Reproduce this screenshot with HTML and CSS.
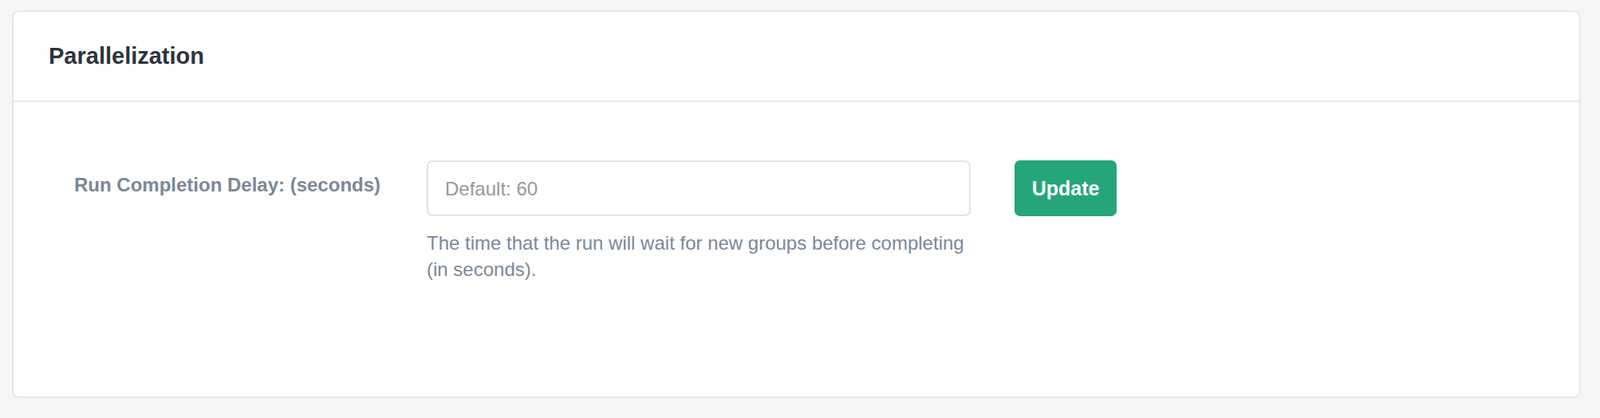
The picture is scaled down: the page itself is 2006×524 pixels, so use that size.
FILE: index.html
```html
<!DOCTYPE html>
<html>
<head>
<meta charset="utf-8">
<title>Parallelization</title>
<link rel="stylesheet" href="styles.css">
</head>
<body>
<section class="card">
  <header class="card-header">
    <h2 class="card-title">Parallelization</h2>
  </header>
  <div class="card-body">
    <div class="form-row">
      <label class="form-label" for="delay">Run Completion Delay: (seconds)</label>
      <div class="form-field">
        <input id="delay" class="form-input" type="text" placeholder="Default: 60">
        <p class="form-help">The time that the run will wait for new groups before completing (in seconds).</p>
      </div>
      <button class="btn-update" type="button">Update</button>
    </div>
  </div>
</section>
</body>
</html>
```

FILE: styles.css
```css
html, body {
  margin: 0;
  padding: 0;
  background: #f6f6f6;
  font-family: "Liberation Sans", Arial, Helvetica, sans-serif;
}

body {
  padding: 13px 24px 26px 15px;
}

.card {
  background: #ffffff;
  border: 2px solid #e7e7e7;
  border-radius: 9px;
  overflow: hidden;
}

.card-header {
  height: 111px;
  display: flex;
  align-items: center;
  padding: 0 44px;
  border-bottom: 2px solid #e7ebef;
}

.card-title {
  margin: 0;
  font-size: 29px;
  font-weight: bold;
  color: #2a343d;
  line-height: 1;
}

.card-body {
  padding: 73px 76px 0;
  height: 296px;
  box-sizing: content-box;
}

.form-row {
  display: flex;
  align-items: flex-start;
}

.form-label {
  width: 442px;
  flex: none;
  padding-top: 14px;
  font-size: 24px;
  line-height: 34px;
  font-weight: bold;
  color: #7b8896;
}

.form-field {
  width: 682px;
  flex: none;
}

.form-input {
  display: block;
  box-sizing: border-box;
  width: 682px;
  height: 70px;
  margin: 0;
  padding: 2px 21px 0;
  border: 2px solid #dfe4ec;
  border-radius: 7px;
  background: #fff;
  font-family: "Liberation Sans", Arial, Helvetica, sans-serif;
  font-size: 24px;
  color: #333;
  outline: none;
}

.form-input::placeholder {
  color: #9b9792;
}

.form-help {
  margin: 17px 0 0;
  font-size: 24px;
  line-height: 33px;
  color: #7b8896;
}

.btn-update {
  flex: none;
  margin-left: 55px;
  width: 128px;
  height: 70px;
  border: none;
  border-radius: 7px;
  background: #26a57a;
  color: #fff;
  font-family: "Liberation Sans", Arial, Helvetica, sans-serif;
  font-size: 25px;
  font-weight: bold;
  padding: 0;
  cursor: pointer;
}
```
